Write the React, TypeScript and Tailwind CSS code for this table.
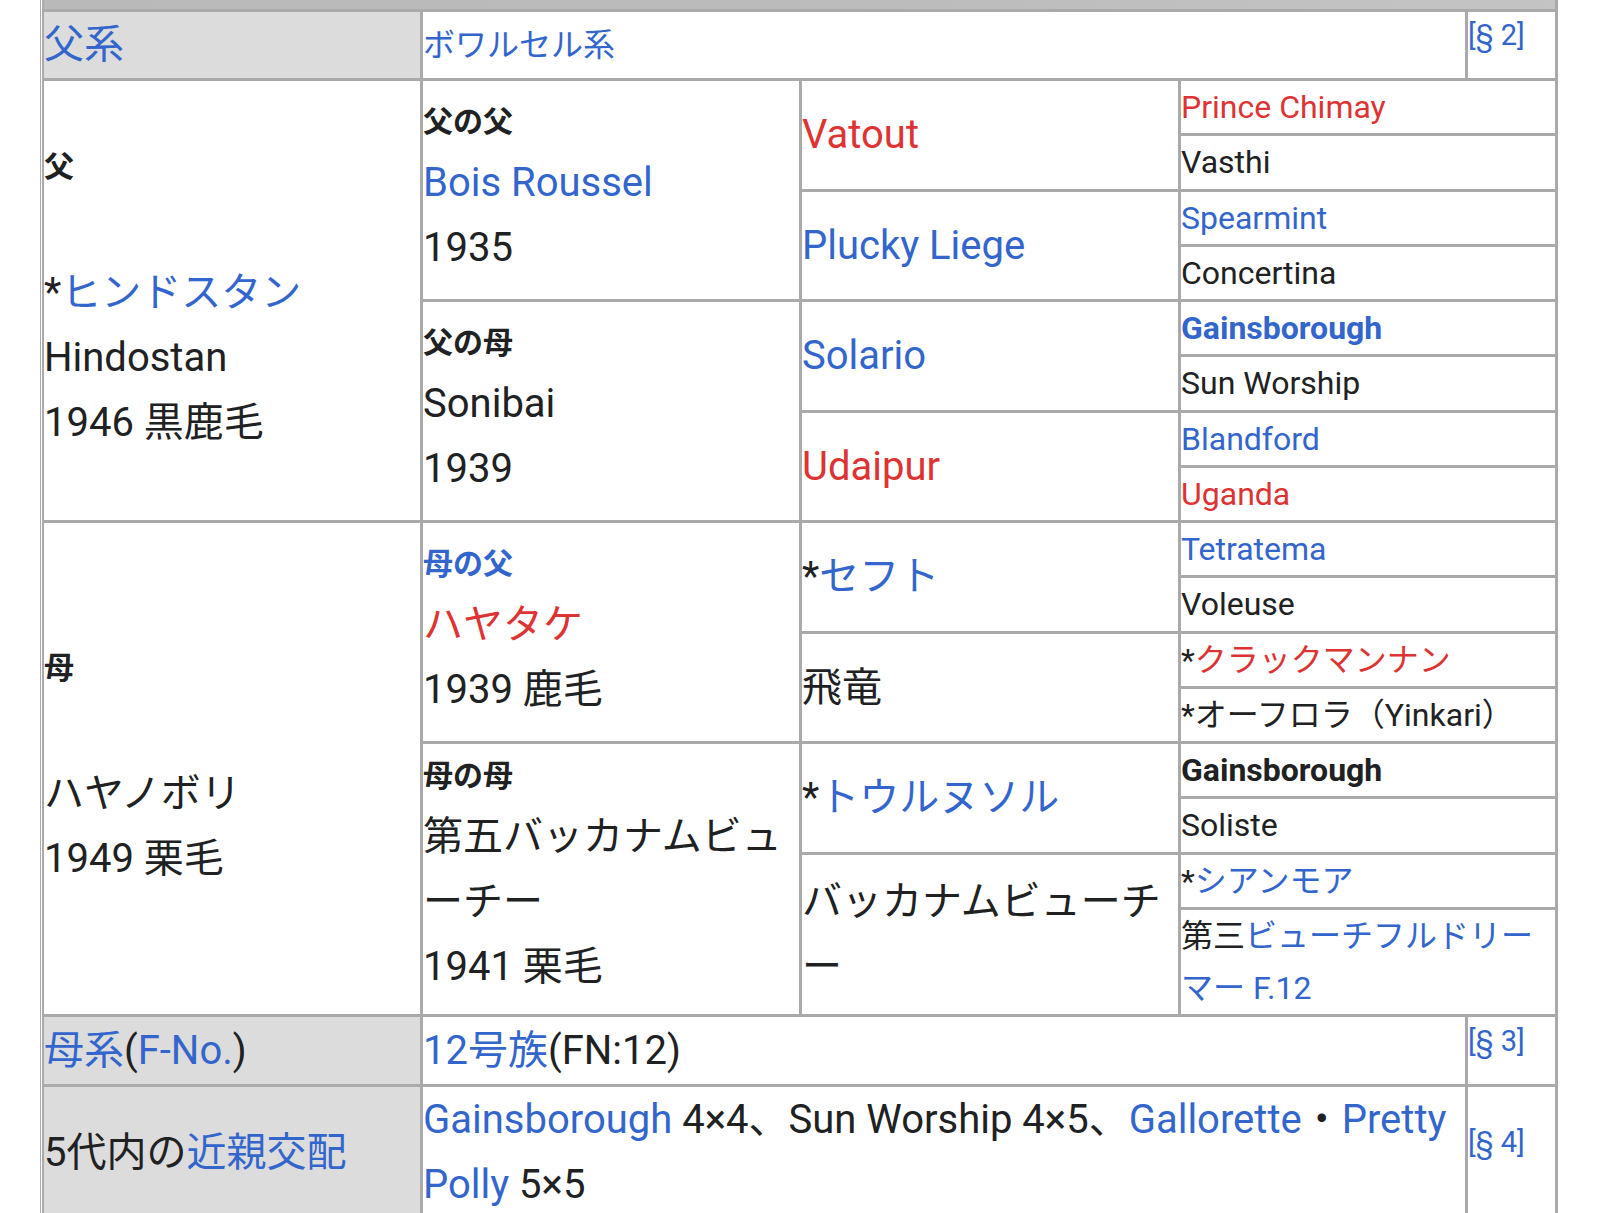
import React from "react";

const blue = "text-[#3366cc]";
const red = "text-[#dd3333]";

function Gen4({ children }: { children: React.ReactNode }) {
  return (
    <div className="col-span-2 flex items-center bg-white text-[32px] leading-[52.25px]">
      <div>{children}</div>
    </div>
  );
}

function Gen3({ children }: { children: React.ReactNode }) {
  return (
    <div className="row-span-2 flex items-center bg-white text-[40px] leading-[65px]">
      <div>{children}</div>
    </div>
  );
}

function Label({ children, link }: { children: React.ReactNode; link?: boolean }) {
  return (
    <div className={`text-[30px] font-bold leading-[57px] ${link ? blue : ""}`}>
      {children}
    </div>
  );
}

function Ref({ n }: { n: number }) {
  return (
    <div className="flex items-center bg-white">
      <span className={`mb-5 text-[29px] leading-[34px] ${blue}`}>[§ {n}]</span>
    </div>
  );
}

export default function App() {
  return (
    <div className="h-[1213px] w-[1600px] overflow-hidden bg-white font-[Roboto,'Noto_Sans_CJK_JP',sans-serif] text-[#202122]">
      <div className="ml-[40px] w-[1518px] border-l border-[#aaa] pl-px">
        <div className="grid grid-cols-[376px_376px_376px_284px_87px] gap-[3px] bg-[#aaa] pl-[2px] pr-[3px]">
          {/* bottom of the row above, cut off by the screen */}
          <div className="col-span-5 h-[9px] bg-gradient-to-r from-[#b9b9b9] via-[#bbbbbb] to-[#c4c4c4]" />

          {/* 父系 */}
          <div className={`flex items-center bg-[#dcdcdc] text-[40px] leading-[66px] ${blue}`}>
            父系
          </div>
          <div className={`col-span-3 flex items-center bg-white text-[32px] leading-[66px] ${blue}`}>
            ボワルセル系
          </div>
          <Ref n={2} />

          {/* 父 */}
          <div className="row-span-8 flex flex-col justify-center bg-white pb-2 text-[40px] leading-[65px]">
            <Label>父</Label>
            <div className="h-[65px]" />
            <div>
              *<span className={blue}>ヒンドスタン</span>
            </div>
            <div>Hindostan</div>
            <div>1946 黒鹿毛</div>
          </div>
          <div className="row-span-4 flex flex-col justify-center bg-white pb-2 text-[40px] leading-[65px]">
            <Label>父の父</Label>
            <div className={blue}>Bois Roussel</div>
            <div>1935</div>
          </div>
          <Gen3>
            <span className={red}>Vatout</span>
          </Gen3>
          <Gen4>
            <span className={red}>Prince Chimay</span>
          </Gen4>
          <Gen4>Vasthi</Gen4>
          <Gen3>
            <span className={blue}>Plucky Liege</span>
          </Gen3>
          <Gen4>
            <span className={blue}>Spearmint</span>
          </Gen4>
          <Gen4>Concertina</Gen4>

          <div className="row-span-4 flex flex-col justify-center bg-white pb-2 text-[40px] leading-[65px]">
            <Label>父の母</Label>
            <div>Sonibai</div>
            <div>1939</div>
          </div>
          <Gen3>
            <span className={blue}>Solario</span>
          </Gen3>
          <Gen4>
            <span className={`font-bold ${blue}`}>Gainsborough</span>
          </Gen4>
          <Gen4>Sun Worship</Gen4>
          <Gen3>
            <span className={red}>Udaipur</span>
          </Gen3>
          <Gen4>
            <span className={blue}>Blandford</span>
          </Gen4>
          <Gen4>
            <span className={red}>Uganda</span>
          </Gen4>

          {/* 母 */}
          <div className="row-span-8 flex flex-col justify-center bg-white pb-2 text-[40px] leading-[65px]">
            <Label>母</Label>
            <div className="h-[65px]" />
            <div>ハヤノボリ</div>
            <div>1949 栗毛</div>
          </div>
          <div className="row-span-4 flex flex-col justify-center bg-white pb-2 text-[40px] leading-[65px]">
            <Label link>母の父</Label>
            <div className={red}>ハヤタケ</div>
            <div>1939 鹿毛</div>
          </div>
          <Gen3>
            *<span className={blue}>セフト</span>
          </Gen3>
          <Gen4>
            <span className={blue}>Tetratema</span>
          </Gen4>
          <Gen4>Voleuse</Gen4>
          <Gen3>飛竜</Gen3>
          <Gen4>
            *<span className={red}>クラックマンナン</span>
          </Gen4>
          <Gen4>*オーフロラ（Yinkari）</Gen4>

          <div className="row-span-4 flex flex-col justify-center bg-white pb-3 text-[40px] leading-[65px]">
            <Label>母の母</Label>
            <div>
              第五バッカナムビュ
              <br />
              ーチー
            </div>
            <div>1941 栗毛</div>
          </div>
          <Gen3>
            *<span className={blue}>トウルヌソル</span>
          </Gen3>
          <Gen4>
            <span className="font-bold">Gainsborough</span>
          </Gen4>
          <Gen4>Soliste</Gen4>
          <Gen3>
            バッカナムビューチ
            <br />ー
          </Gen3>
          <Gen4>
            *<span className={blue}>シアンモア</span>
          </Gen4>
          <Gen4>
            第三<span className={blue}>ビューチフルドリー</span>
            <br />
            <span className={blue}>マー F.12</span>
          </Gen4>

          {/* 母系 */}
          <div className="flex items-center bg-[#dcdcdc] text-[40px] leading-[67px]">
            <span className={blue}>母系</span>(<span className={blue}>F-No.</span>)
          </div>
          <div className="col-span-3 flex items-center bg-white text-[40px] leading-[67px]">
            <span className={blue}>12号族</span>(FN:12)
          </div>
          <Ref n={3} />

          {/* 近親交配 */}
          <div className="flex items-center bg-[#dcdcdc] text-[40px] leading-[65px]">
            5代内の<span className={blue}>近親交配</span>
          </div>
          <div className="col-span-3 flex items-center bg-white text-[40px] leading-[65px]">
            <div>
              <span className={blue}>Gainsborough</span> 4×4、Sun Worship 4×5、
              <span className={blue}>Gallorette</span>・<span className={blue}>Pretty</span>
              <br />
              <span className={blue}>Polly</span> 5×5
            </div>
          </div>
          <Ref n={4} />
        </div>
      </div>
    </div>
  );
}
